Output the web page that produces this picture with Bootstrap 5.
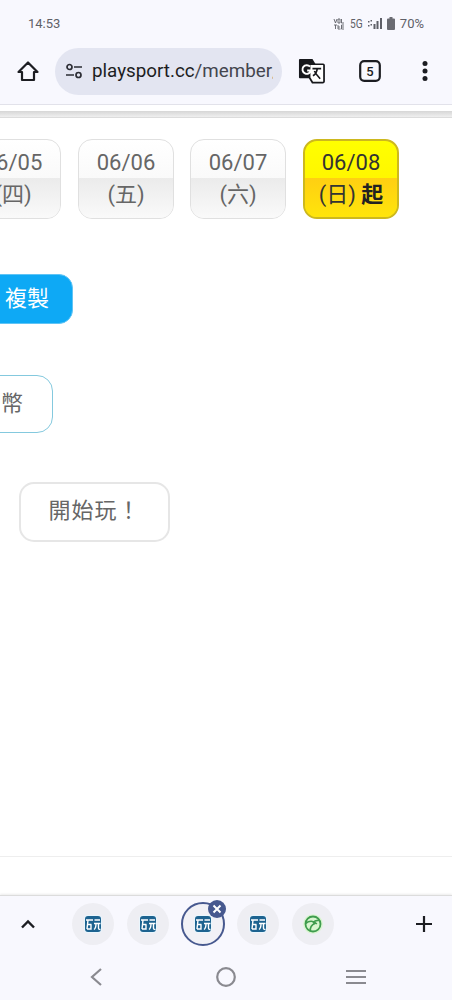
<!DOCTYPE html>
<html lang="zh-Hant">
<head>
  <meta charset="UTF-8" />
  <meta name="viewport" content="width=device-width, initial-scale=1.0" />
  <title>playsport.cc</title>
  <link href="https://cdn.jsdelivr.net/npm/bootstrap@5.3.2/dist/css/bootstrap.min.css" rel="stylesheet">
  <style>
    html, body { height: 100%; }
    body {
      width: 452px;
      height: 1000px;
      overflow: hidden;
      background: #fff;
      font-family: Roboto, "Noto Sans CJK TC", sans-serif;
      color: #666;
    }
    .status-bar {
      height: 42px;
      padding: 6px 28px 0 28px;
      background: #f8f8fe;
      font-size: 13px;
      color: #5f6068;
    }
    .status-right { font-size: 13px; gap: 5px; }
    .net-label { font-size: 12px; transform: scaleX(.85); margin: 0 -1px; }
    .tool-bar {
      height: 63px;
      padding: 0 0 4px 16px;
      background: #f8f8fe;
      border-bottom: 1px solid #e2e2ea;
    }
    .url-pill {
      width: 227px;
      height: 47px;
      margin: 1px 0 0 15px;
      padding: 0 9px 0 10px;
      gap: 9px;
      border-radius: 24px;
      background: #e3e5f1;
      font-size: 18.800px;
      color: #43454e;
      white-space: nowrap;
    }
    .url-pill span { min-width: 0; overflow: hidden; }
    .url-pill b { font-weight: 400; color: #1c1d22; }
    .translate-slot { margin-left: 16px; }
    .tabs-slot { margin-left: 34px; }
    .more-slot { margin-left: 41px; }
    .page-rule {
      height: 7px;
      margin-top: 6px;
      background: linear-gradient(#d6d6d6, #efefef);
      border-bottom: 1px solid #dcdcdc;
    }
    .date-row {
      margin: 21px 0 0 -35px;
      gap: 16px;
    }
    .date-tile {
      width: 96px;
      height: 80px;
      border: 1px solid #e0e0e0;
      border-radius: 14px;
      overflow: hidden;
      font-size: 22px;
      text-align: center;
      background: linear-gradient(#fff, #f4f4f4);
    }
    .date-tile:first-child { margin-right: 1px; }
    .date-tile .tile-top { height: 38px; padding-top: 4px; line-height: 38px; }
    .date-tile .tile-bottom {
      height: 41px;
      line-height: 34px;
      background: linear-gradient(#ebebeb, #fafafa);
    }
    .date-tile.picked {
      margin-left: 1px;
      border: 2px solid #cdb81e;
      color: #333;
      background: linear-gradient(#ffff00, #ffee00);
    }
    .date-tile.picked .tile-top { height: 37px; padding-top: 3px; }
    .date-tile.picked .tile-bottom {
      background: linear-gradient(#ffcf12, #ffe60a);
    }
    .date-tile.picked strong { color: #222; font-weight: 700; }
    .copy-btn {
      display: block;
      width: 120px;
      height: 50px;
      margin: 55px 0 0 -47px;
      padding: 0 23px 0 0;
      border: 1px solid #60c4f5;
      border-radius: 14px;
      background: #0ea9f5;
      color: #fff;
      font-size: 22px;
      text-align: right;
    }
    .coin-btn {
      display: block;
      width: 100px;
      height: 59px;
      margin: 51px 0 0 -47px;
      padding: 0 29px 0 0;
      border: 1px solid #84c9de;
      border-radius: 16px;
      background: #fff;
      color: #666;
      font-size: 22px;
      text-align: right;
    }
    .start-btn {
      display: block;
      width: 151px;
      height: 60px;
      margin: 49px 0 0 19px;
      padding: 0 0 4px;
      border: 2px solid #e6e6e6;
      border-radius: 15px;
      background: #fff;
      color: #666;
      font-size: 22px;
      letter-spacing: 1px;
    }
    .page-foot {
      height: 39px;
      margin-top: 314px;
      border-top: 1px solid #eeeeee;
      background: #fff;
    }
    .bottom-bar {
      height: 105px;
      background: #f8f8fe;
      border-top: 1px solid #dcdcdc;
      box-shadow: 0 -1px 2px rgba(0,0,0,.08);
    }
    .tab-strip { height: 56px; padding: 0 19px 0 20px; }
    .tab-dots { margin-left: 36px; gap: 13px; }
    .tab-dot {
      position: relative;
      width: 42px;
      height: 42px;
      border-radius: 50%;
      background: #eeeef3;
    }
    .tab-dot.current {
      width: 44px;
      height: 44px;
      margin: 0 -1px;
      background: #f1f1f6;
      border: 2px solid #47598f;
    }
    .close-badge {
      position: absolute;
      top: -4px;
      right: -3px;
      width: 18px;
      height: 18px;
      border-radius: 50%;
      background: #47598f;
    }
    .sys-nav { height: 48px; padding: 2px 0 0 0; }
    .sys-slot { width: 130px; }
  </style>
</head>
<body class="d-flex flex-column">
  <div class="status-bar d-flex justify-content-between align-items-center">
    <span>14:53</span>
    <span class="status-right d-flex align-items-center">
      <svg width="12" height="12" viewBox="0 0 12 12"><g stroke="#5f6068" stroke-width=".9" fill="none"><path d="M1 1l1.500 4L4 1M5 1h2v4H5zM8.500 1v4h2.500M1 7h3M2.500 7v4M5 7v4h2.500M5 9h2M11 7H8.500v4H11M8.500 9H11"/></g></svg>
      <span class="net-label">5G</span>
      <svg width="14" height="12" viewBox="0 0 14 12"><g fill="#5f6068"><rect x="0" y="3" width="1.500" height="1.500"/><rect x="0" y="7" width="1.500" height="1.500"/><rect x="2.500" y="2" width="1.500" height="1.500"/><rect x="2.500" y="6" width="1.500" height="1.500"/><rect x="5.500" y="6" width="2" height="5"/><rect x="8.500" y="3" width="2" height="8"/><rect x="12" y="0" width="2" height="11"/></g></svg>
      <svg width="8" height="13" viewBox="0 0 8 13"><path d="M2.500 0h3v1.500H7a1 1 0 0 1 1 1V12a1 1 0 0 1-1 1H1a1 1 0 0 1-1-1V2.500a1 1 0 0 1 1-1h1.500z" fill="#6a6b72"/></svg>
      <span>70%</span>
    </span>
  </div>

  <div class="tool-bar d-flex align-items-center">
    <svg width="24" height="24" viewBox="0 0 24 24" fill="none" stroke="#1c1d22" stroke-width="2.200" stroke-linejoin="round"><path d="M12 3.500L2.500 13H6v8h12v-8h3.500z"/></svg>
    <div class="url-pill d-flex align-items-center">
      <svg class="flex-shrink-0" width="18" height="18" viewBox="0 0 18 18" fill="none" stroke="#2b2c33" stroke-width="1.700"><circle cx="4.500" cy="5" r="2.500"/><path d="M9 5h8M1 13h8"/><circle cx="13.500" cy="13" r="2.500"/></svg>
      <span><b>playsport.cc</b>/member/</span>
    </div>
    <div class="translate-slot d-flex">
      <svg width="27" height="26" viewBox="0 0 28 26">
        <path d="M1 1.500a1 1 0 0 1 1-1h13l3 5v15H2a1 1 0 0 1-1-1z" fill="#17181c"/>
        <path d="M12 6h14a1 1 0 0 1 1 1v17a1 1 0 0 1-1 1H15l-3-5z" fill="#fff" stroke="#17181c" stroke-width="1.800"/>
        <path d="M12.500 8.500a4.500 4.500 0 1 0 1 4h-4" fill="none" stroke="#fff" stroke-width="2"/>
        <path d="M15 10.500h9M20 10.500c-.5 4-2 6-4.500 7.500M17 13c1.500 3 4 6 6 8" fill="none" stroke="#17181c" stroke-width="1.700"/>
      </svg>
    </div>
    <div class="tabs-slot d-flex">
      <svg width="22" height="22" viewBox="0 0 22 22">
        <rect x="1.200" y="1.200" width="19.600" height="19.600" rx="4" fill="none" stroke="#1c1d22" stroke-width="2.200"/>
        <text x="11" y="16" text-anchor="middle" font-family="Roboto, sans-serif" font-size="13" font-weight="500" fill="#1c1d22">5</text>
      </svg>
    </div>
    <div class="more-slot d-flex">
      <svg width="6" height="22" viewBox="0 0 6 22" fill="#1c1d22"><circle cx="3" cy="3.500" r="2.500"/><circle cx="3" cy="11" r="2.500"/><circle cx="3" cy="18.500" r="2.500"/></svg>
    </div>
  </div>

  <div class="page-rule"></div>

  <div class="date-row d-flex">
    <div class="date-tile flex-shrink-0"><div class="tile-top">06/05</div><div class="tile-bottom">(四)</div></div>
    <div class="date-tile flex-shrink-0"><div class="tile-top">06/06</div><div class="tile-bottom">(五)</div></div>
    <div class="date-tile flex-shrink-0"><div class="tile-top">06/07</div><div class="tile-bottom">(六)</div></div>
    <div class="date-tile picked flex-shrink-0"><div class="tile-top">06/08</div><div class="tile-bottom">(日) <strong>起</strong></div></div>
  </div>

  <button type="button" class="copy-btn">複製</button>
  <button type="button" class="coin-btn">幣</button>
  <button type="button" class="start-btn">開始玩！</button>

  <div class="page-foot"></div>

  <div class="bottom-bar">
    <div class="tab-strip d-flex align-items-center">
      <svg width="16" height="10" viewBox="0 0 16 10" fill="none" stroke="#1c1d22" stroke-width="2.400"><path d="M2 8.500l6-6 6 6"/></svg>
      <div class="tab-dots d-flex align-items-center flex-grow-1">
        <div class="tab-dot d-flex align-items-center justify-content-center"><svg width="18" height="18" viewBox="0 0 18 18"><use href="#fav-wan"/></svg></div>
        <div class="tab-dot d-flex align-items-center justify-content-center"><svg width="18" height="18" viewBox="0 0 18 18"><use href="#fav-wan"/></svg></div>
        <div class="tab-dot current d-flex align-items-center justify-content-center">
          <svg width="18" height="18" viewBox="0 0 18 18"><use href="#fav-wan"/></svg>
          <span class="close-badge d-flex align-items-center justify-content-center"><svg width="10" height="10" viewBox="0 0 10 10" stroke="#fff" stroke-width="2"><path d="M1.500 1.500l7 7M8.500 1.500l-7 7"/></svg></span>
        </div>
        <div class="tab-dot d-flex align-items-center justify-content-center"><svg width="18" height="18" viewBox="0 0 18 18"><use href="#fav-wan"/></svg></div>
        <div class="tab-dot d-flex align-items-center justify-content-center">
          <svg width="20" height="20" viewBox="0 0 20 20">
            <circle cx="10" cy="10" r="9.800" fill="#d8f5cf"/>
            <circle cx="10" cy="10" r="7.500" fill="none" stroke="#3f9c4e" stroke-width="1.800"/>
            <path d="M2.800 9.500c3-3 8-3 11 .5M7.500 17c-.8-3 1-6.500 4.500-7.500M16 6.500c-3-.5-5 1-6 2.500" fill="none" stroke="#3f9c4e" stroke-width="1.600"/>
          </svg>
        </div>
      </div>
      <svg width="18" height="18" viewBox="0 0 18 18" stroke="#1c1d22" stroke-width="2.200"><path d="M9 1v16M1 9h16"/></svg>
    </div>
    <div class="sys-nav d-flex justify-content-center align-items-center">
      <div class="sys-slot d-flex justify-content-center">
        <svg width="14" height="20" viewBox="0 0 14 20" fill="none" stroke="#8a8a90" stroke-width="2.200"><path d="M12 2L3 10l9 8"/></svg>
      </div>
      <div class="sys-slot d-flex justify-content-center">
        <svg width="20" height="20" viewBox="0 0 20 20" fill="none" stroke="#8a8a90" stroke-width="2.200"><circle cx="10" cy="10" r="8.800"/></svg>
      </div>
      <div class="sys-slot d-flex justify-content-center">
        <svg width="22" height="16" viewBox="0 0 22 16" stroke="#8a8a90" stroke-width="2.200"><path d="M1 2h20M1 8h20M1 14h20"/></svg>
      </div>
    </div>
  </div>

  <svg width="0" height="0" class="d-block position-absolute">
    <defs>
      <g id="fav-wan">
        <rect x="0" y="0" width="18" height="18" rx="4" fill="#e9f6fd"/>
        <rect x="1" y="1" width="16" height="16" rx="3" fill="#1d6390"/>
        <path d="M2 5h7M4 5l-1 9M3.500 9.500h4M7 9.500V14H3M10.500 5h5.500M10 8.500h6.500M12 8.500c0 3-.5 5-2 6M14.500 8.500v5c0 .8.500 1 2 1" fill="none" stroke="#fff" stroke-width="1.400"/>
      </g>
    </defs>
  </svg>
</body>
</html>
